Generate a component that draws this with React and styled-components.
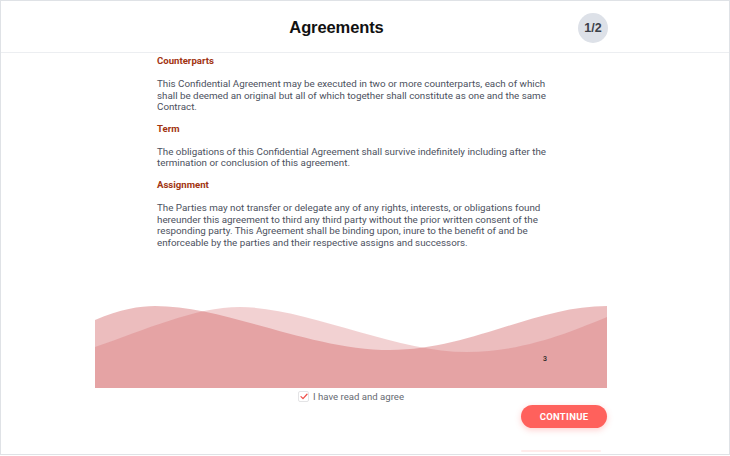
import React from "react";
import styled, { createGlobalStyle } from "styled-components";

const Global = createGlobalStyle`
  html, body { margin: 0; padding: 0; background: #ffffff; }
  body { font-family: Roboto, "Liberation Sans", Arial, sans-serif; }
  * { box-sizing: border-box; }
`;

const Frame = styled.div`
  width: 730px;
  height: 455px;
  border: 1px solid #dfe2e6;
  background: #fff;
  display: flex;
  flex-direction: column;
  overflow: hidden;
`;

const Header = styled.header`
  height: 52px;
  border-bottom: 1px solid #eceef1;
  display: flex;
  align-items: center;
  padding: 0 121px 0 94px;
  flex-shrink: 0;
`;

const Title = styled.h1`
  flex: 1;
  margin: 0;
  padding-top: 2px;
  text-align: center;
  font-family: "Liberation Sans", Arial, sans-serif;
  font-weight: 700;
  font-size: 16.5px;
  color: #111;
  letter-spacing: -0.1px;
`;

const Badge = styled.div`
  width: 30px;
  height: 30px;
  border-radius: 50%;
  background: #dde1e8;
  color: #3b4049;
  display: flex;
  align-items: center;
  justify-content: center;
  font-family: "Liberation Sans", Arial, sans-serif;
  font-size: 12.5px;
  font-weight: 700;
  margin-top: 2px;
`;

const Main = styled.main`
  width: 512px;
  margin-left: 94px;
  display: flex;
  flex-direction: column;
`;

const Article = styled.article`
  width: 402px;
  margin-left: 62px;
  padding-top: 2px;
  height: 247px;
`;

const SectionTitle = styled.h2`
  margin: 0 0 11px;
  font-size: 9.6px;
  line-height: 12px;
  font-weight: 700;
  color: #a23411;
`;

const Paragraph = styled.p`
  margin: 0 0 10px;
  font-size: 9.8px;
  line-height: 11.6px;
  color: #4c515e;
`;

const WaveBox = styled.div`
  position: relative;
  height: 88px;
  width: 512px;
`;

const WaveSvg = styled.svg`
  display: block;
  width: 512px;
  height: 88px;
`;

const PageNo = styled.span`
  position: absolute;
  left: 448px;
  top: 55px;
  font-size: 7px;
  color: #222;
  font-weight: 500;
`;

const AgreeRow = styled.label`
  margin-top: 2px;
  display: flex;
  align-items: center;
  justify-content: center;
  gap: 4px;
  height: 12px;
  font-size: 9.6px;
  color: #666a72;
`;

const CheckBox = styled.span`
  width: 11px;
  height: 11px;
  border: 1px solid #e4e4e6;
  border-radius: 2px;
  display: flex;
  align-items: center;
  justify-content: center;
`;

const Actions = styled.div`
  margin-top: 3px;
  display: flex;
  flex-direction: column;
  align-items: flex-end;
`;

const ContinueButton = styled.button`
  width: 86px;
  height: 23px;
  border: none;
  border-radius: 12px;
  background: #ff615c;
  color: #fff;
  font-family: Roboto, "Liberation Sans", Arial, sans-serif;
  font-weight: 700;
  font-size: 9.5px;
  letter-spacing: 0.3px;
  box-shadow: 0 2px 6px rgba(255, 97, 92, 0.3);
  cursor: pointer;
  padding: 0;
`;

const GhostLine = styled.div`
  width: 80px;
  height: 2px;
  margin-top: 22px;
  margin-right: 6px;
  background: rgba(255, 97, 92, 0.12);
  border-radius: 1px;
`;

const sections = [
  {
    title: "Counterparts",
    body:
      "This Confidential Agreement may be executed in two or more counterparts, each of which shall be deemed an original but all of which together shall constitute as one and the same Contract.",
  },
  {
    title: "Term",
    body:
      "The obligations of this Confidential Agreement shall survive indefinitely including after the termination or conclusion of this agreement.",
  },
  {
    title: "Assignment",
    body:
      "The Parties may not transfer or delegate any of any rights, interests, or obligations found hereunder this agreement to third any third party without the prior written consent of the responding party. This Agreement shall be binding upon, inure to the benefit of and be enforceable by the parties and their respective assigns and successors.",
  },
];

export default function App() {
  return (
    <>
      <Global />
      <Frame>
        <Header>
          <Title>Agreements</Title>
          <Badge>1/2</Badge>
        </Header>
        <Main>
          <Article>
            {sections.map((s) => (
              <section key={s.title}>
                <SectionTitle>{s.title}</SectionTitle>
                <Paragraph>{s.body}</Paragraph>
              </section>
            ))}
          </Article>
          <WaveBox>
            <WaveSvg viewBox="0 0 512 88" preserveAspectRatio="none">
              <path
                d="M0,20 C25,9 45,6 60,6 C130,6 215,50 295,50 C375,50 440,6 512,6 L512,88 L0,88 Z"
                fill="rgb(212,104,107)"
                fillOpacity="0.44"
              />
              <path
                d="M0,47 C50,30 100,7 145,7 C210,7 300,52 372,52 C430,52 480,30 512,17 L512,88 L0,88 Z"
                fill="rgb(212,104,107)"
                fillOpacity="0.3"
              />
            </WaveSvg>
            <PageNo>3</PageNo>
          </WaveBox>
          <AgreeRow>
            <CheckBox>
              <svg width="8" height="7" viewBox="0 0 8 7">
                <path d="M1,3.6 L3,5.6 L7,1.2" fill="none" stroke="#f0524c" strokeWidth="1.3" strokeLinecap="round" strokeLinejoin="round" />
              </svg>
            </CheckBox>
            I have read and agree
          </AgreeRow>
          <Actions>
            <ContinueButton>CONTINUE</ContinueButton>
            <GhostLine />
          </Actions>
        </Main>
      </Frame>
    </>
  );
}
